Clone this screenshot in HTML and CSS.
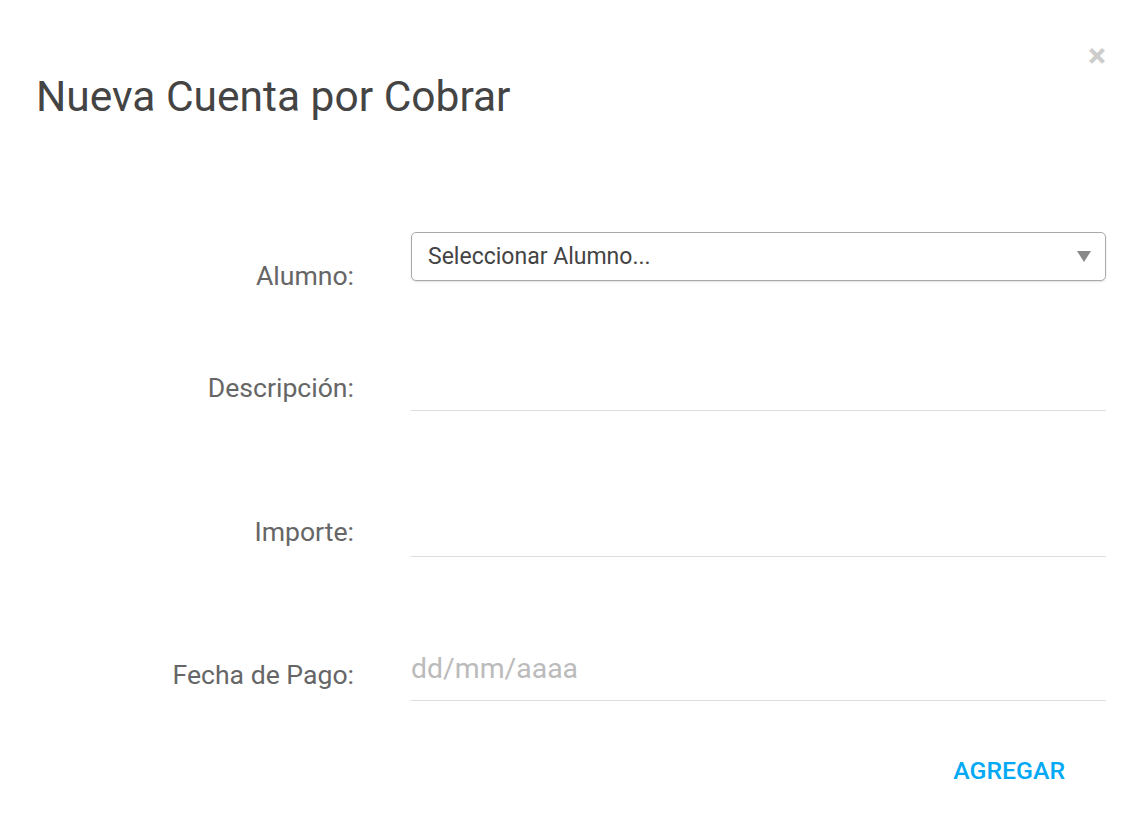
FILE: index.html
```html
<!DOCTYPE html>
<html lang="es">
<head>
<meta charset="utf-8">
<title>Nueva Cuenta por Cobrar</title>
<link rel="stylesheet" href="styles.css">
</head>
<body>
<div class="modal">
  <button class="close" type="button" aria-label="Cerrar">&times;</button>
  <h1 class="title">Nueva Cuenta por Cobrar</h1>
  <form class="form">
    <div class="row row-select">
      <label class="label">Alumno:</label>
      <div class="select">
        <span>Seleccionar Alumno...</span>
        <span class="arrow"></span>
      </div>
    </div>
    <div class="row row-input row-desc">
      <label class="label">Descripción:</label>
      <div class="input"></div>
    </div>
    <div class="row row-input row-imp">
      <label class="label">Importe:</label>
      <div class="input"></div>
    </div>
    <div class="row row-input row-date">
      <label class="label">Fecha de Pago:</label>
      <div class="input placeholder">dd/mm/aaaa</div>
    </div>
    <div class="actions">
      <button class="btn" type="button">AGREGAR</button>
    </div>
  </form>
</div>
</body>
</html>
```

FILE: styles.css
```css
html, body {
  margin: 0;
  padding: 0;
  background: #ffffff;
}
body {
  font-family: Roboto, "Liberation Sans", sans-serif;
  color: #444;
}
.modal {
  position: relative;
  padding: 0 41px 0 36px;
  height: 834px;
  box-sizing: border-box;
}
.close {
  position: absolute;
  top: 38px;
  right: 41px;
  border: 0;
  background: none;
  padding: 0;
  font-family: Roboto, sans-serif;
  font-size: 34px;
  font-weight: 700;
  line-height: 34px;
  color: #cccccc;
}
.title {
  margin: 0;
  padding-top: 72px;
  font-size: 42.5px;
  line-height: 50px;
  font-weight: 400;
  color: #444444;
}
.form {
  margin-top: 110px;
}
.row {
  display: grid;
  grid-template-columns: 318px 695px;
  column-gap: 57px;
}
.label {
  text-align: right;
  font-size: 26.6px;
  line-height: 30px;
  color: #666666;
}
.row-select {
  height: 49px;
}
.row-select .label {
  padding-top: 29px;
}
.select {
  box-sizing: border-box;
  height: 49px;
  border: 1px solid #a9a9a9;
  border-radius: 5px;
  box-shadow: 0 1px 2px rgba(0,0,0,0.12);
  display: flex;
  align-items: center;
  justify-content: space-between;
  padding: 0 14px 0 16px;
  font-size: 23px;
  color: #444444;
}
.arrow {
  width: 0;
  height: 0;
  border-left: 7px solid transparent;
  border-right: 7px solid transparent;
  border-top: 11px solid #888888;
}
.row-input .input {
  box-sizing: border-box;
  height: 48px;
  border-bottom: 1px solid #dddddd;
  padding-top: 0;
}
.row-input .label {
  padding-top: 7px;
}
.row-desc { margin-top: 82px; }
.row-desc .label { padding-top: 10px; }
.row-imp { margin-top: 98px; }
.row-imp .label { padding-top: 8px; }
.row-date { margin-top: 96px; }
.row-input .placeholder {
  color: #bbbbbb;
  font-size: 28.4px;
  line-height: 28px;
  padding-top: 2px;
}
.actions {
  display: flex;
  justify-content: flex-end;
  margin-top: 56px;
  padding-right: 41px;
}
.btn {
  border: 0;
  background: none;
  padding: 0;
  font-family: Roboto, sans-serif;
  font-size: 24.8px;
  font-weight: 500;
  line-height: 28px;
  color: #03a9f4;
}
```
